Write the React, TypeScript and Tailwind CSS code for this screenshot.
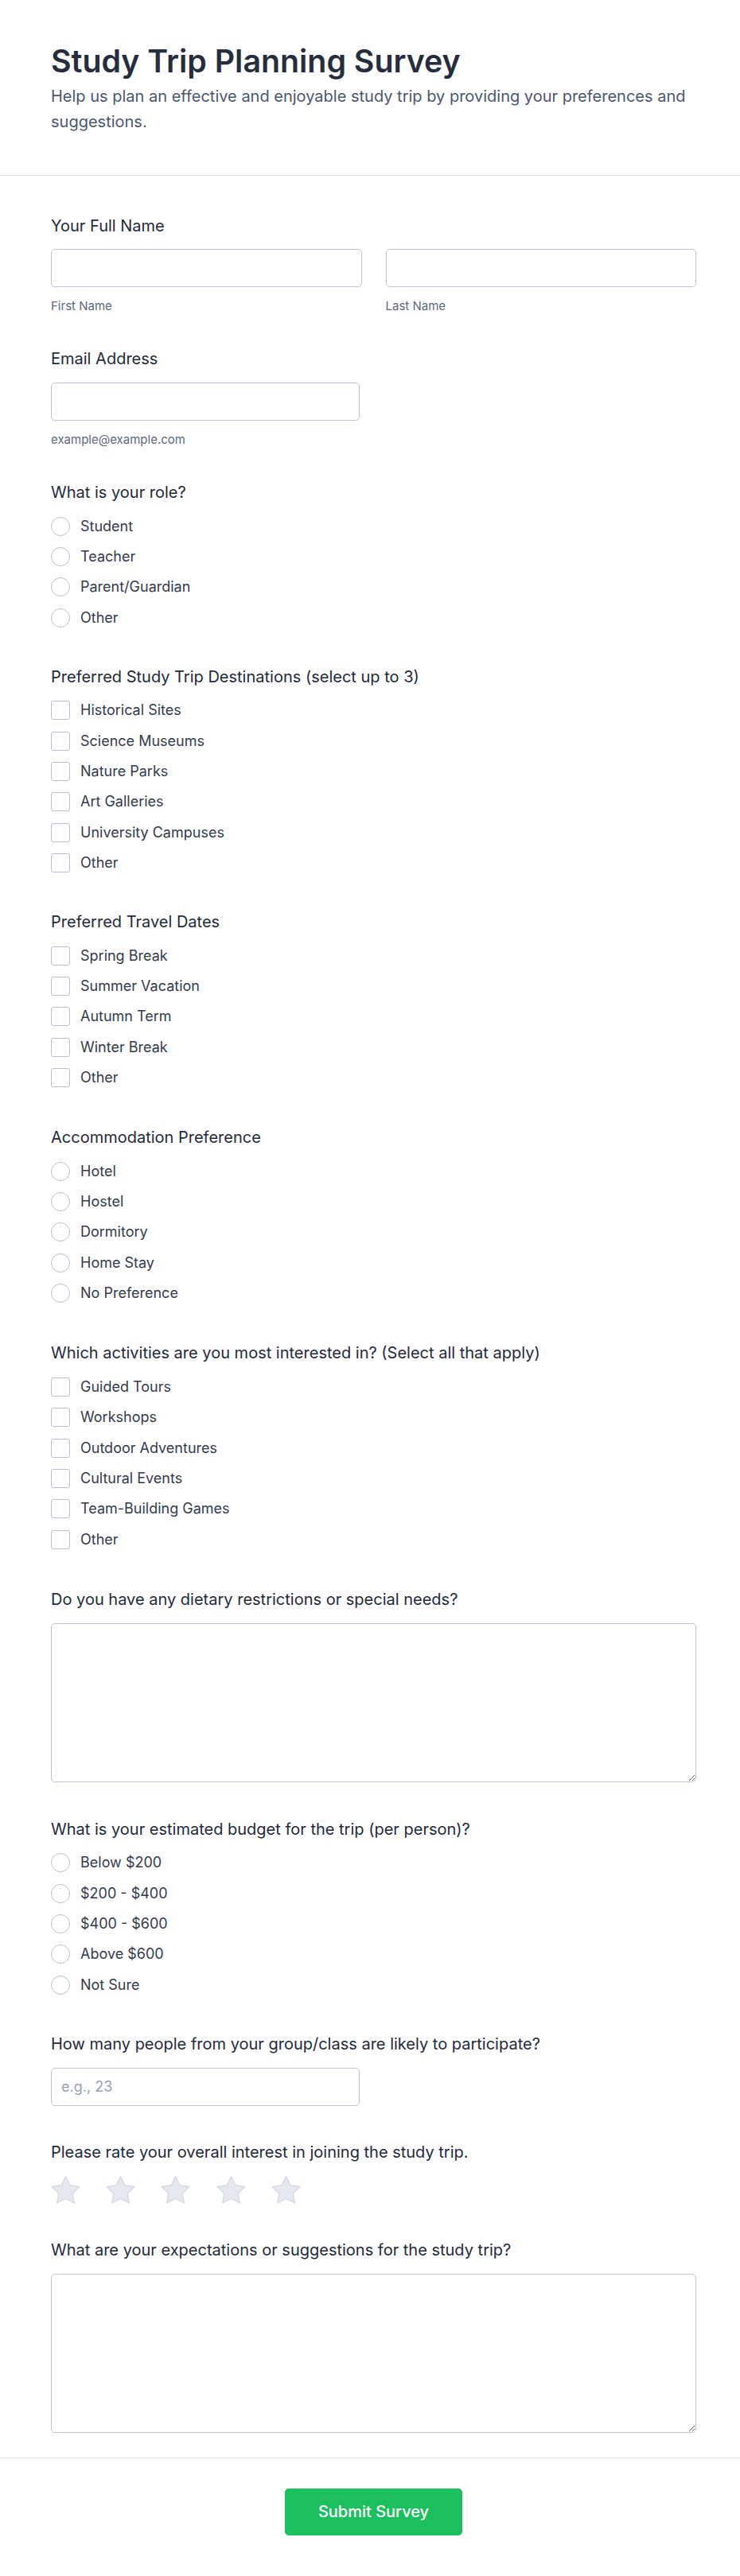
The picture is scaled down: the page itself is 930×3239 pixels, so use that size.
import { useState } from 'react';

const roles = ['Student', 'Teacher', 'Parent/Guardian', 'Other'];
const destinations = ['Historical Sites', 'Science Museums', 'Nature Parks', 'Art Galleries', 'University Campuses', 'Other'];
const travelDates = ['Spring Break', 'Summer Vacation', 'Autumn Term', 'Winter Break', 'Other'];
const accommodation = ['Hotel', 'Hostel', 'Dormitory', 'Home Stay', 'No Preference'];
const activities = ['Guided Tours', 'Workshops', 'Outdoor Adventures', 'Cultural Events', 'Team-Building Games', 'Other'];
const budgets = ['Below $200', '$200 - $400', '$400 - $600', 'Above $600', 'Not Sure'];

function OptionList({ name, type, options }: { name: string; type: 'radio' | 'checkbox'; options: string[] }) {
  return (
    <div className="flex flex-col gap-[10.4px]">
      {options.map((opt) => (
        <label key={opt} className="flex h-[28px] items-center gap-[13px] text-[18px] leading-[28px] text-[#333b4c]">
          <input
            type={type}
            name={name}
            value={opt}
            className={
              type === 'radio'
                ? 'h-6 w-6 shrink-0 appearance-none rounded-full border border-[#b9bfca] bg-white'
                : 'h-6 w-6 shrink-0 appearance-none rounded-[3px] border border-[#b9bfca] bg-white'
            }
          />
          <span>{opt}</span>
        </label>
      ))}
    </div>
  );
}

function Star({ active }: { active: boolean }) {
  return (
    <svg width="37" height="35" viewBox="1.5 1.5 21 20.1" className="shrink-0">
      <polygon
        points="12,2 15.09,8.26 22,9.27 17,14.14 18.18,21.02 12,17.77 5.82,21.02 7,14.14 2,9.27 8.91,8.26"
        fill={active ? '#facc15' : '#e5e8ee'}
        stroke={active ? '#eab308' : '#d5d9e1'}
        strokeWidth="0.8"
        strokeLinejoin="round"
      />
    </svg>
  );
}

export default function App() {
  const [rating, setRating] = useState(0);

  const labelCls = 'block text-[20px] leading-[28px] font-normal text-[#232a3a]';
  const inputCls = 'block h-12 rounded-[5px] border border-[#bfc4d0] bg-white px-3 text-[18px] text-gray-800 placeholder:text-gray-400 outline-none';
  const areaCls = 'block h-[200px] w-full rounded-[5px] border border-[#bfc4d0] bg-white px-3 py-2 text-[18px] text-gray-800 outline-none';

  return (
    <div className="min-h-screen bg-white font-['Inter',sans-serif]">
      {/* Header */}
      <header className="border-b border-[#dadde6] pl-16 pr-[55px] pt-[54px] pb-[51px]">
        <h1 className="text-[39.3px] leading-[45px] font-semibold text-[#262d3d]">Study Trip Planning Survey</h1>
        <p className="mt-[7px] text-[20px] leading-[31.5px] text-[#4b5671]">
          Help us plan an effective and enjoyable study trip by providing your preferences and suggestions.
        </p>
      </header>

      {/* Form */}
      <main className="flex flex-col pl-16 pr-[55px] pt-[49px] pb-[31px]">
        <section>
          <label className={labelCls + ' mb-[15px]'}>Your Full Name</label>
          <div className="grid grid-cols-2 gap-[30px]">
            <div>
              <input type="text" className={inputCls + ' w-full'} />
              <p className="mt-[14px] text-[15px] leading-[20px] text-[#5d687d]">First Name</p>
            </div>
            <div>
              <input type="text" className={inputCls + ' w-full'} />
              <p className="mt-[14px] text-[15px] leading-[20px] text-[#5d687d]">Last Name</p>
            </div>
          </div>
        </section>

        <section className="mt-[42px]">
          <label className={labelCls + ' mb-[16px]'}>Email Address</label>
          <input type="email" className={inputCls + ' w-[388px]'} />
          <p className="mt-[14px] text-[15px] leading-[20px] text-[#5d687d]">example@example.com</p>
        </section>

        <section className="mt-[42px]">
          <p className={labelCls + ' mb-[14.5px]'}>What is your role?</p>
          <OptionList name="role" type="radio" options={roles} />
        </section>

        <section className="mt-[46px]">
          <p className={labelCls + ' mb-[14.5px]'}>Preferred Study Trip Destinations (select up to 3)</p>
          <OptionList name="destinations" type="checkbox" options={destinations} />
        </section>

        <section className="mt-[46px]">
          <p className={labelCls + ' mb-[14.5px]'}>Preferred Travel Dates</p>
          <OptionList name="dates" type="checkbox" options={travelDates} />
        </section>

        <section className="mt-[47px]">
          <p className={labelCls + ' mb-[14.5px]'}>Accommodation Preference</p>
          <OptionList name="accommodation" type="radio" options={accommodation} />
        </section>

        <section className="mt-[47px]">
          <p className={labelCls + ' mb-[14.5px]'}>Which activities are you most interested in? (Select all that apply)</p>
          <OptionList name="activities" type="checkbox" options={activities} />
        </section>

        <section className="mt-[47px]">
          <label className={labelCls + ' mb-[16px]'}>Do you have any dietary restrictions or special needs?</label>
          <textarea className={areaCls} />
        </section>

        <section className="mt-[45px]">
          <p className={labelCls + ' mb-[14.5px]'}>What is your estimated budget for the trip (per person)?</p>
          <OptionList name="budget" type="radio" options={budgets} />
        </section>

        <section className="mt-[46px]">
          <label className={labelCls + ' mb-[16px]'}>How many people from your group/class are likely to participate?</label>
          <input type="number" placeholder="e.g., 23" className={inputCls + ' w-[388px]'} />
        </section>

        <section className="mt-[44px]">
          <p className={labelCls + ' mb-[16px]'}>Please rate your overall interest in joining the study trip.</p>
          <div className="flex gap-[32.2px]">
            {[1, 2, 3, 4, 5].map((n) => (
              <button key={n} type="button" onClick={() => setRating(n)} className="p-0">
                <Star active={n <= rating} />
              </button>
            ))}
          </div>
        </section>

        <section className="mt-[44px]">
          <label className={labelCls + ' mb-[16px]'}>What are your expectations or suggestions for the study trip?</label>
          <textarea className={areaCls} />
        </section>
      </main>

      {/* Footer */}
      <footer className="flex justify-center border-t border-[#dfe2ea] pl-16 pr-[55px] pt-[38px] pb-[50px]">
        <button
          type="submit"
          className="h-[59px] w-[223px] rounded-[5px] bg-[#1bbf5e] text-[20px] font-medium text-white"
        >
          Submit Survey
        </button>
      </footer>
    </div>
  );
}
